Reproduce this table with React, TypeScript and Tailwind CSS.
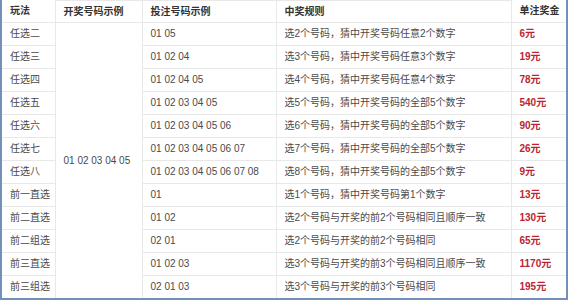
import React from 'react';

const ROWS = [
  { name: '任选二', bet: '01 05', rule: '选2个号码，猜中开奖号码任意2个数字', prize: '6元' },
  { name: '任选三', bet: '01 02 04', rule: '选3个号码，猜中开奖号码任意3个数字', prize: '19元' },
  { name: '任选四', bet: '01 02 04 05', rule: '选4个号码，猜中开奖号码任意4个数字', prize: '78元' },
  { name: '任选五', bet: '01 02 03 04 05', rule: '选5个号码，猜中开奖号码的全部5个数字', prize: '540元' },
  { name: '任选六', bet: '01 02 03 04 05 06', rule: '选6个号码，猜中开奖号码的全部5个数字', prize: '90元' },
  { name: '任选七', bet: '01 02 03 04 05 06 07', rule: '选7个号码，猜中开奖号码的全部5个数字', prize: '26元' },
  { name: '任选八', bet: '01 02 03 04 05 06 07 08', rule: '选8个号码，猜中开奖号码的全部5个数字', prize: '9元' },
  { name: '前一直选', bet: '01', rule: '选1个号码，猜中开奖号码第1个数字', prize: '13元' },
  { name: '前二直选', bet: '01 02', rule: '选2个号码与开奖的前2个号码相同且顺序一致', prize: '130元' },
  { name: '前二组选', bet: '02 01', rule: '选2个号码与开奖的前2个号码相同', prize: '65元' },
  { name: '前三直选', bet: '01 02 03', rule: '选3个号码与开奖的前3个号码相同且顺序一致', prize: '1170元' },
  { name: '前三组选', bet: '02 01 03', rule: '选3个号码与开奖的前3个号码相同', prize: '195元' },
];

const cell = 'border border-[#e8e8e8] pl-[8px] pr-[4px] text-left align-middle whitespace-nowrap';

export default function App() {
  return (
    <div
      className="w-[570px] h-[301px] bg-white overflow-hidden"
      style={{ fontFamily: '"Liberation Sans", "Noto Sans CJK SC", sans-serif' }}
    >
      <div className="w-[568px] h-[300px] border-l-2 border-r-2 border-b-2 border-[#7290b8] overflow-hidden">
        <table className="w-full border-collapse table-fixed text-[10px] text-[#4a4a4a] leading-none">
          <colgroup>
            <col className="w-[53px]" />
            <col className="w-[87px]" />
            <col className="w-[134px]" />
            <col className="w-[235px]" />
            <col />
          </colgroup>
          <thead>
            <tr className="h-[22px] font-bold text-[#333]">
              <th className={`${cell} border-t-0 border-l-0`}>玩法</th>
              <th className={cell}>开奖号码示例</th>
              <th className={cell}>投注号码示例</th>
              <th className={cell}>中奖规则</th>
              <th className={`${cell} border-t-0 border-r-0`}>单注奖金</th>
            </tr>
          </thead>
          <tbody>
            {ROWS.map((r, i) => (
              <tr key={r.name} className="h-[23px]">
                <td className={`${cell} border-l-0`}>{r.name}</td>
                {i === 0 && (
                  <td rowSpan={ROWS.length} className={cell}>
                    01 02 03 04 05
                  </td>
                )}
                <td className={cell}>{r.bet}</td>
                <td className={cell}>{r.rule}</td>
                <td className={`${cell} border-r-0 font-bold text-[#bb2530]`}>{r.prize}</td>
              </tr>
            ))}
          </tbody>
        </table>
      </div>
    </div>
  );
}
